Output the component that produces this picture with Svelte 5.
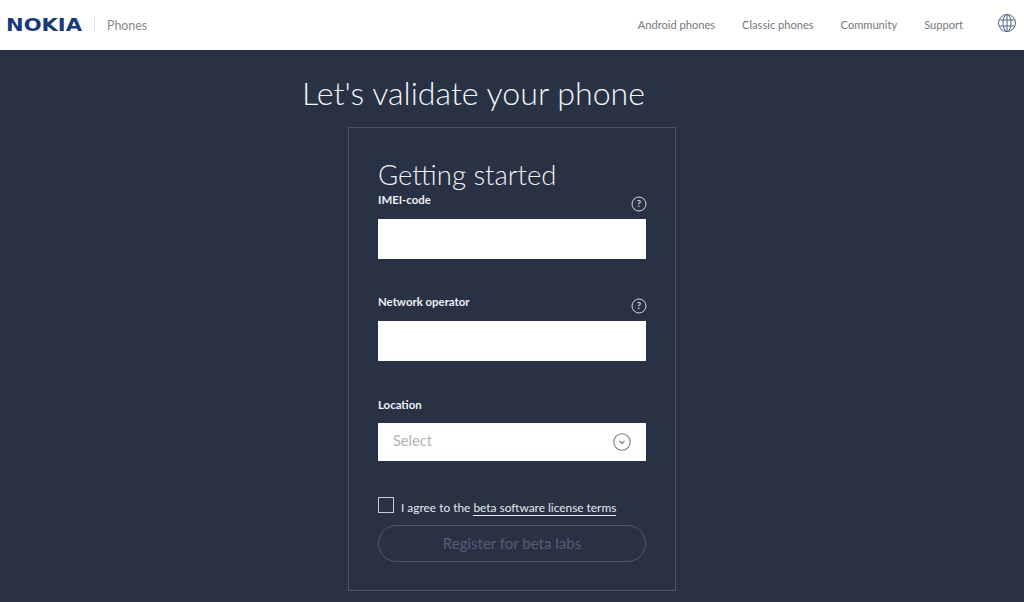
<script>
  const links = ['Android phones', 'Classic phones', 'Community', 'Support'];
</script>

<div class="page">
  <header>
    <div class="brand">
      <span class="logo-box"><span class="logo">NOKIA</span></span>
      <span class="sep"></span>
      <span class="section">Phones</span>
    </div>
    <nav>
      {#each links as l}
        <span>{l}</span>
      {/each}
      <svg class="globe" width="20" height="20" viewBox="0 0 20 20" fill="none" stroke="#4f6787" stroke-width="1">
        <circle cx="10" cy="10" r="8.5"/>
        <ellipse cx="10" cy="10" rx="4" ry="8.5"/>
        <path d="M10 1.5v17M2.3 7h15.4M2.3 13h15.4"/>
      </svg>
    </nav>
  </header>
  <main>
    <h1>Let's validate your phone</h1>
    <section class="card">
      <h2>Getting started</h2>
      <div class="label first"><span>IMEI-code</span>{@render help()}</div>
      <div class="input"></div>
      <div class="label second"><span>Network operator</span>{@render help()}</div>
      <div class="input"></div>
      <div class="label third"><span>Location</span></div>
      <div class="select">
        <span>Select</span>
        <svg width="18" height="18" viewBox="0 0 18 18" fill="none" stroke="#77797c" stroke-width="1.1">
          <circle cx="9" cy="9" r="8.2"/>
          <path d="M6.5 8l2.5 2.5 2.5-2.5"/>
        </svg>
      </div>
      <div class="agree">
        <span class="box"></span>
        <span class="agree-text">I agree to the <span class="terms">beta software license terms</span></span>
      </div>
      <div class="btn">Register for beta labs</div>
    </section>
  </main>
</div>

{#snippet help()}
  <svg class="help" width="16" height="16" viewBox="0 0 16 16" fill="none">
    <circle cx="8" cy="8" r="7" stroke="#d5d8de" stroke-width="1"/>
    <text x="8" y="11.3" text-anchor="middle" fill="#d5d8de" font-size="9.5" font-family="Lato, sans-serif">?</text>
  </svg>
{/snippet}

<style>
  :global(body) {
    margin: 0;
    background: #293145;
    font-family: Lato, "Open Sans", sans-serif;
  }
  .page {
    width: 1024px;
    height: 602px;
    overflow: hidden;
    display: flex;
    flex-direction: column;
  }
  header {
    height: 50px;
    flex: none;
    box-sizing: border-box;
    background: #fff;
    display: flex;
    align-items: center;
    justify-content: space-between;
    padding: 0 7px 1px 6px;
  }
  .brand {
    display: flex;
    align-items: center;
  }
  .logo-box {
    display: block;
    width: 77px;
  }
  .logo {
    display: block;
    font-family: "DejaVu Sans", sans-serif;
    font-weight: 700;
    font-size: 18px;
    line-height: 20px;
    color: #17397c;
    transform: scaleX(1.17);
    transform-origin: left center;
    white-space: nowrap;
  }
  .sep {
    width: 1px;
    height: 15px;
    background: #e3e5e8;
    margin: 0 12px 0 11px;
  }
  .section {
    font-size: 12.4px;
    font-weight: 400;
    color: #85888d;
    margin-top: 1px;
  }
  nav {
    display: flex;
    align-items: center;
    font-size: 11.1px;
    color: #75787d;
  }
  nav span {
    margin-right: 27px;
  }
  nav span:nth-child(4) {
    margin-right: 34px;
  }
  .globe {
    display: block;
    margin-top: -3px;
  }
  main {
    flex: 1;
    display: flex;
    flex-direction: column;
    align-items: flex-start;
    padding-left: 348px;
    background: #293145;
  }
  h1 {
    margin: 20px 0 0 -46px;
    height: 57px;
    font-size: 32.15px;
    line-height: 46px;
    font-weight: 300;
    color: #f4f5f7;
    white-space: nowrap;
  }
  .card {
    box-sizing: border-box;
    width: 328px;
    height: 464px;
    border: 1px solid #4a5267;
    padding: 29px 29px 0 29px;
    display: flex;
    flex-direction: column;
  }
  h2 {
    margin: 0;
    font-size: 27.5px;
    line-height: 36px;
    font-weight: 300;
    color: #f1f2f5;
    white-space: nowrap;
    height: 35px;
  }
  .label {
    display: flex;
    justify-content: space-between;
    align-items: flex-start;
    font-size: 11.4px;
    line-height: 16px;
    font-weight: 700;
    color: #eef0f3;
  }
  .label.first {
    height: 27px;
  }
  .label.second {
    margin-top: 35px;
    height: 27px;
  }
  .label.third {
    margin-top: 36px;
    height: 26px;
  }
  .help {
    margin-top: 4px;
    margin-right: -1px;
  }
  .input {
    height: 40px;
    background: #fff;
    flex: none;
  }
  .select {
    height: 38px;
    flex: none;
    background: #fff;
    display: flex;
    align-items: center;
    justify-content: space-between;
    padding: 0 15px 0 15px;
    font-size: 14.6px;
    color: #b1b3b6;
  }
  .select span {
    margin-top: -3px;
  }
  .select svg {
    display: block;
  }
  .agree {
    display: flex;
    align-items: center;
    margin-top: 35px;
    height: 18px;
  }
  .box {
    box-sizing: border-box;
    width: 16px;
    height: 16px;
    border: 1px solid #c9ccd3;
    flex: none;
    margin-right: 7px;
  }
  .agree-text {
    font-size: 11.9px;
    color: #e6e8ec;
    padding-top: 5px;
  }
  .terms {
    border-bottom: 1px solid #e6e8ec;
  }
  .btn {
    box-sizing: border-box;
    margin-top: 11px;
    height: 37px;
    padding-bottom: 2px;
    border: 1px solid #50586d;
    border-radius: 19px;
    display: flex;
    align-items: center;
    justify-content: center;
    font-size: 15px;
    color: #565e72;
  }
</style>
